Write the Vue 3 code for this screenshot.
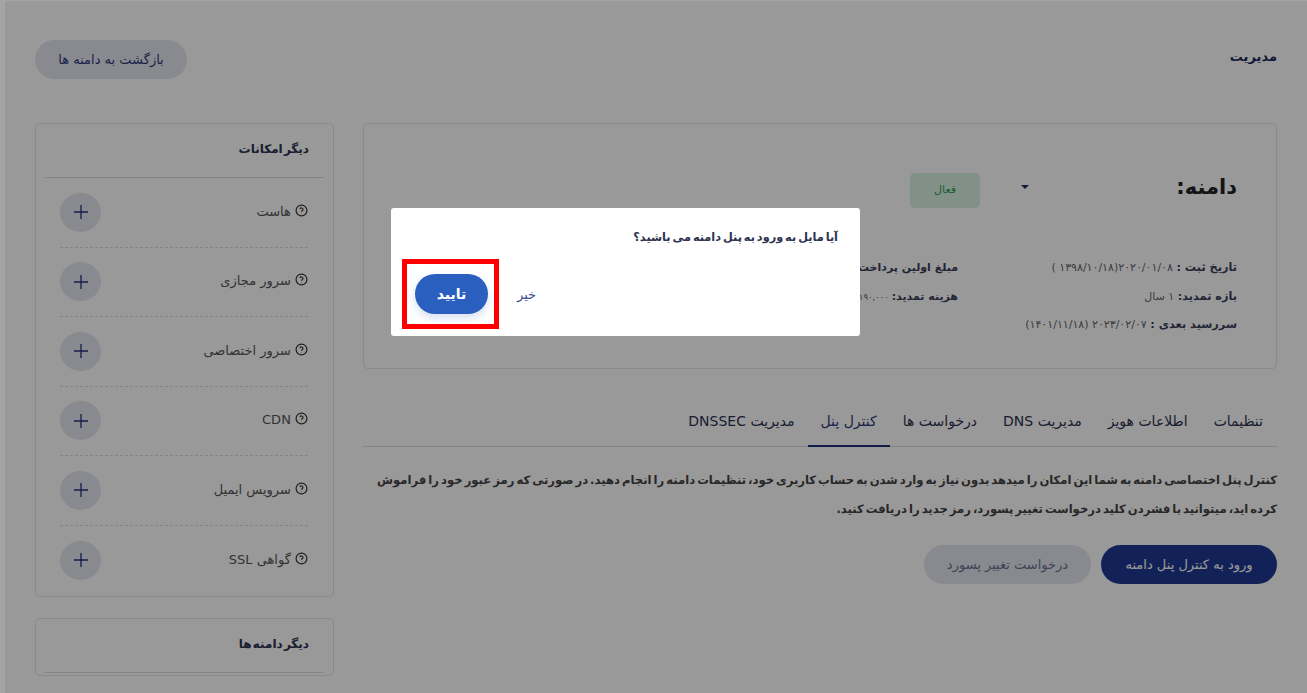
<template>
  <div class="page" dir="rtl">
    <header class="top">
      <h1>مدیریت</h1>
      <button class="btn soft back">بازگشت به دامنه ها</button>
    </header>

    <div class="columns">
      <main class="content">
        <section class="card domain">
          <div class="domain-head">
            <h2>دامنه:</h2>
            <span class="caret"></span>
            <span class="badge">فعال</span>
          </div>
          <div class="info">
            <div class="info-col">
              <p v-for="row in infoRight" :key="row.label"><b>{{ row.label }}</b> {{ row.value }}</p>
            </div>
            <div class="info-col prices">
              <p v-for="row in infoLeft" :key="row.label"><b>{{ row.label }}</b> {{ row.value }}</p>
            </div>
          </div>
        </section>

        <nav class="tabs">
          <a v-for="tab in tabs" :key="tab" :class="{ active: tab === 'کنترل پنل' }">{{ tab }}</a>
        </nav>

        <p class="desc">
          کنترل پنل اختصاصی دامنه به شما این امکان را میدهد بدون نیاز به وارد شدن به حساب کاربری خود، تنظیمات دامنه را انجام دهید. در صورتی که رمز عبور خود را فراموش<br />
          کرده اید، میتوانید با فشردن کلید درخواست تغییر پسورد، رمز جدید را دریافت کنید.
        </p>

        <div class="actions">
          <button class="btn primary">ورود به کنترل پنل دامنه</button>
          <button class="btn soft muted">درخواست تغییر پسورد</button>
        </div>
      </main>

      <aside class="side">
        <section class="card features">
          <h3>دیگر امکانات</h3>
          <div v-for="item in features" :key="item" class="feature">
            <span class="feature-name">
              <svg viewBox="0 0 24 24" width="13" height="13" fill="none" stroke="#333" stroke-width="2.2">
                <circle cx="12" cy="12" r="10" />
                <path d="M9 9.2a3 3 0 0 1 5.8 1c0 2-2.8 2.4-2.8 4" />
                <path d="M12 17.2v.6" />
              </svg>
              {{ item }}
            </span>
            <button class="plus">
              <svg viewBox="0 0 16 16" width="16" height="16" stroke="#1f2f7a" stroke-width="1.3">
                <path d="M8 1v14M1 8h14" />
              </svg>
            </button>
          </div>
        </section>
        <section class="card others">
          <h3>دیگر دامنه ها</h3>
        </section>
      </aside>
    </div>
  </div>

  <div class="strip"></div>
  <div class="overlay"></div>

  <div class="dialog" dir="rtl">
    <p class="question">آیا مایل به ورود به پنل دامنه می باشید؟</p>
    <div class="dialog-actions">
      <button class="no">خیر</button>
      <span class="highlight">
        <button class="yes">تایید</button>
      </span>
    </div>
  </div>
</template>

<script setup>
const infoRight = [
  { label: "تاریخ ثبت :", value: "۲۰۲۰/۰۱/۰۸(۱۳۹۸/۱۰/۱۸ )" },
  { label: "بازه تمدید:", value: "۱ سال" },
  { label: "سررسید بعدی :", value: "۲۰۲۳/۰۲/۰۷ (۱۴۰۱/۱۱/۱۸)" },
];
const infoLeft = [
  { label: "مبلغ اولین پرداخت :", value: "" },
  { label: "هزینه تمدید:", value: "۱۹۰,۰۰۰" },
];
const tabs = ["تنظیمات", "اطلاعات هویز", "مدیریت DNS", "درخواست ها", "کنترل پنل", "مدیریت DNSSEC"];
const features = ["هاست", "سرور مجازی", "سرور اختصاصی", "CDN", "سرویس ایمیل", "گواهی SSL"];
</script>

<style>
html,
body {
  margin: 0;
  height: 100%;
  overflow: hidden;
  background: #fff;
}
</style>

<style scoped>
.page {
  box-sizing: border-box;
  height: 693px;
  padding: 40px 30px 0 35px;
  font-family: "DejaVu Sans", "Noto Sans", sans-serif;
  color: #2c3350;
  overflow: hidden;
}
h1,
h2,
h3,
p {
  margin: 0;
}
button {
  font-family: inherit;
  border: 0;
  cursor: pointer;
}
.top {
  display: flex;
  justify-content: space-between;
  align-items: flex-start;
  height: 83px;
}
h1 {
  font-size: 13px;
  font-weight: 600;
  color: #1f2a5c;
  margin-top: 9px;
}
.btn {
  height: 39px;
  border-radius: 20px;
  font-size: 13px;
}
.soft {
  background: #e4e6f0;
  color: #2f3a78;
}
.back {
  width: 152px;
}
.columns {
  display: flex;
  justify-content: space-between;
}
.content {
  width: 914px;
}
.side {
  width: 299px;
  display: flex;
  flex-direction: column;
  gap: 21px;
}
.card {
  box-sizing: border-box;
  background: #fff;
  border: 1px solid #e6e6e6;
  border-radius: 5px;
}
.domain {
  height: 246px;
  padding: 45px 39px 0 0;
}
.domain-head {
  display: flex;
  align-items: center;
  height: 36px;
}
h2 {
  font-size: 21px;
  font-weight: 700;
  letter-spacing: -1px;
  color: #222;
  width: 208px;
}
.caret {
  border: 4px solid transparent;
  border-top: 4px solid #1f2a6c;
  border-bottom: 0;
  margin-left: 41px;
}
.badge {
  width: 70px;
  height: 35px;
  line-height: 33px;
  text-align: center;
  font-size: 11px;
  color: #2f9e5b;
  background: #d9f2e2;
  border-radius: 5px;
  margin-top: 6px;
}
.info {
  display: flex;
  margin-top: 49px;
}
.info-col {
  width: 279px;
}
.info-col p {
  height: 28.5px;
  line-height: 28.5px;
  font-size: 11px;
  color: #666;
  white-space: nowrap;
}
.info-col b {
  color: #3a3f5c;
  font-weight: 600;
  font-size: 11.3px;
}
.prices p {
  font-size: 8.5px;
}
.prices b {
  font-size: 11px;
  letter-spacing: -0.2px;
}
.tabs {
  display: flex;
  height: 53px;
  margin-top: 25px;
  border-bottom: 1px solid #ddd;
  box-sizing: border-box;
}
.tabs a {
  padding: 19px 13px 0;
  font-size: 14px;
  color: #2c3350;
  white-space: nowrap;
}
.tabs a:first-child {
  padding-right: 14px;
}
.tabs a.active {
  color: #2f3a78;
  border-bottom: 2px solid #1f2f7a;
  height: 32px;
}
.desc {
  margin-top: 19px;
  font-size: 11.6px;
  font-weight: 600;
  letter-spacing: -0.6px;
  word-spacing: -2px;
  line-height: 29px;
  color: #444;
  white-space: nowrap;
}
.actions {
  display: flex;
  gap: 10px;
  margin-top: 21px;
}
.primary {
  width: 176px;
  background: #1f3a93;
  color: #fff;
}
.muted {
  width: 167px;
  color: #6b7190;
}
.features {
  height: 474px;
  padding: 0 9px;
}
.features h3,
.others h3 {
  font-size: 12px;
  font-weight: 700;
  letter-spacing: -0.5px;
  word-spacing: -3px;
  color: #2c3350;
  padding: 18px 15px 0;
  height: 35px;
  border-bottom: 1px solid #ddd;
}
.feature {
  display: flex;
  justify-content: space-between;
  align-items: center;
  height: 69.5px;
  margin: 0 16px 0 15px;
  border-bottom: 1px dashed #ddd;
  box-sizing: border-box;
}
.feature:last-child {
  border-bottom: 0;
}
.feature-name {
  font-size: 13px;
  color: #555;
  margin-top: -2px;
}
.feature-name svg {
  vertical-align: -1px;
}
.plus {
  display: flex;
  align-items: center;
  justify-content: center;
  width: 41px;
  height: 39px;
  padding: 0;
  border-radius: 50%;
  background: #e4e6f0;
}
.others {
  height: 58px;
  padding: 0 9px;
}
.strip {
  position: fixed;
  left: 0;
  top: 0;
  width: 5px;
  height: 100%;
  background: #a4a4a4;
  z-index: 2;
}
.overlay {
  position: fixed;
  inset: 0 0 0 5px;
  background: rgba(0, 0, 0, 0.4);
  border-top: 1px solid #a4a4a4;
  z-index: 1;
}
.dialog {
  position: fixed;
  left: 391px;
  top: 208px;
  width: 469px;
  height: 128px;
  box-sizing: border-box;
  padding: 23px 22px 0 11px;
  background: #fff;
  border-radius: 3px;
  font-family: "DejaVu Sans", "Noto Sans", sans-serif;
  z-index: 3;
}
.question {
  height: 14px;
  line-height: 14px;
  font-size: 11.3px;
  font-weight: 600;
  letter-spacing: -0.9px;
  word-spacing: -2px;
  color: #2c3350;
}
.dialog-actions {
  display: flex;
  align-items: center;
  justify-content: flex-end;
  gap: 18px;
  margin-top: 14px;
}
.no {
  background: none;
  padding: 0;
  font-size: 13px;
  color: #3b4a8f;
}
.highlight {
  display: flex;
  align-items: center;
  justify-content: center;
  box-sizing: border-box;
  width: 97px;
  height: 70px;
  padding-left: 2px;
  border: 5px solid #f00;
}
.yes {
  flex: none;
  width: 73px;
  height: 40px;
  padding: 0;
  border-radius: 20px;
  background: #2a5fbf;
  color: #fff;
  font-size: 14px;
  font-weight: 700;
  box-shadow: 0 4px 10px rgba(42, 95, 191, 0.2);
}
</style>
